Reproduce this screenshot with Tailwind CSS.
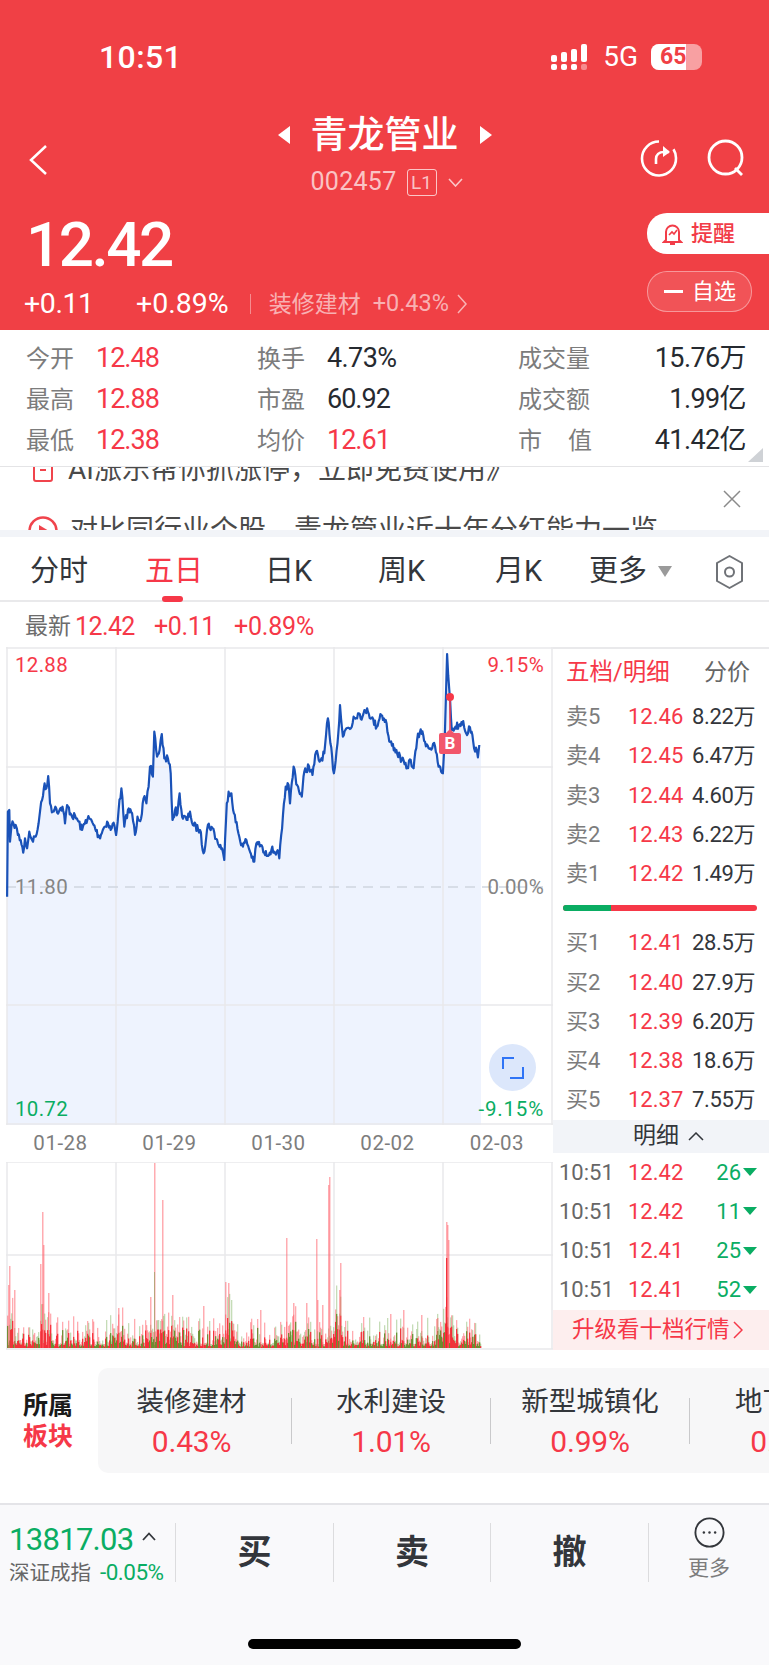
<!DOCTYPE html>
<html lang="zh">
<head>
  <meta charset="UTF-8" />
  <title>青龙管业</title>
  <script src="https://cdn.jsdelivr.net/npm/@tailwindcss/browser@4"></script>
</head>
<body class="bg-white font-['Roboto','Noto_Sans_CJK_SC',sans-serif] overflow-hidden">
<div class="w-[769px] h-[1665px] flex flex-col overflow-hidden">

  <!-- Red header -->
  <header class="bg-[#f04045] text-white h-[330px] shrink-0 flex flex-col">
    <!-- Status bar -->
    <div class="h-[114px] flex items-center pl-[99px] pr-[67px]">
      <span class="text-[32px] font-medium tracking-[0.4px]">10:51</span>
      <svg class="ml-auto" width="38" height="26" viewBox="0 0 38 26" fill="#fff">
        <rect x="0" y="11" width="6" height="7" rx="2"/><rect x="0" y="20" width="6" height="6" rx="2"/>
        <rect x="10" y="8" width="6" height="10" rx="2"/><rect x="10" y="20" width="6" height="6" rx="2"/>
        <rect x="20" y="5" width="6" height="13" rx="2"/><rect x="20" y="20" width="6" height="6" rx="2"/>
        <rect x="30" y="0" width="6" height="18" rx="2"/><rect x="30" y="20" width="6" height="6" rx="2" fill="#fff" fill-opacity=".4"/>
      </svg>
      <span class="ml-[14px] text-[28px] leading-none">5G</span>
      <div class="ml-[13px] w-[51px] h-[26px] rounded-[8px] bg-white/50 overflow-hidden relative">
        <div class="w-[35px] h-[26px] bg-white"></div>
        <span class="absolute inset-0 pl-[9px] text-[23px] leading-[26px] font-bold text-[#f04045]">65</span>
      </div>
    </div>
    <!-- Title row -->
    <div class="h-[86px] flex items-center pl-[29px] pr-[24px] relative">
      <svg class="mt-[5px]" width="18" height="30" viewBox="0 0 18 30" fill="none" stroke="#fff" stroke-width="2.5"><path d="M17 1 2 15l15 14"/></svg>
      <div class="absolute left-0 right-0 top-0 flex flex-col items-center">
        <div class="flex items-center h-[42px]">
          <svg width="12" height="18" viewBox="0 0 12 18" fill="#fff"><path d="M12 0v18L0 9z"/></svg>
          <span class="mx-[21px] text-[37px] leading-none font-medium">青龙管业</span>
          <svg width="12" height="18" viewBox="0 0 12 18" fill="#fff"><path d="M0 0v18l12-9z"/></svg>
        </div>
        <div class="flex items-center h-[32px] mt-[10px] ml-[4px] text-white/70">
          <span class="text-[25px] tracking-[0.3px]">002457</span>
          <span class="ml-[10px] w-[30px] h-[27px] border border-white/70 rounded-[3px] text-[19px] leading-[25px] text-center">L1</span>
          <svg class="ml-[11px]" width="15" height="9" viewBox="0 0 15 9" fill="none" stroke="currentColor" stroke-width="1.6"><path d="m1 1 6.500 7L14 1"/></svg>
        </div>
      </div>
      <svg class="ml-auto mt-[2px]" width="38" height="38" viewBox="0 0 38 38" fill="none" stroke="#fff" stroke-width="2.6">
        <path d="M19 2.500A17 17 0 1 0 36 19a17 17 0 0 0-2.500-8.800"/>
        <path d="M16 25v-5c0-4 3-7 8-7h5"/><path d="m23 7 7 6-7 5" fill="#fff" stroke="none"/>
      </svg>
      <svg class="ml-[29px] mt-[2px]" width="38" height="38" viewBox="0 0 38 38" fill="none" stroke="#fff" stroke-width="2.8">
        <circle cx="18.500" cy="18.500" r="16.500"/><path d="m28 29 7 7"/>
      </svg>
    </div>
    <!-- Price row -->
    <div class="flex-1 flex">
      <div class="flex-1 pl-[26px]">
        <div class="text-[62px] font-medium leading-none mt-[14px] tracking-[-2.500px] h-[75px]">12.42</div>
        <div class="flex items-center h-[30px] text-[28.500px] leading-none">
          <span class="-ml-[2px] w-[112px] tracking-[-0.4px]">+0.11</span>
          <span>+0.89%</span>
          <span class="ml-[21px] w-px h-[20px] bg-white/40"></span>
          <span class="ml-[18px] text-[23px] text-white/60">装修建材</span>
          <span class="ml-[12px] text-[23.500px] text-white/60">+0.43%</span>
          <svg class="ml-[8px]" width="10" height="20" viewBox="0 0 10 20" fill="none" stroke="#fff" stroke-opacity=".6" stroke-width="1.5"><path d="m1 1 8 9-8 9"/></svg>
        </div>
      </div>
      <div class="w-[122px] pt-[13px]">
        <div class="h-[41px] bg-white rounded-l-[20px] flex items-center pl-[15px] text-[#f23c48]">
          <svg width="21" height="24" viewBox="0 0 21 24" fill="none" stroke="currentColor" stroke-width="2">
            <path d="M4 18V10a6.500 6.500 0 0 1 13 0v8l2 2H2z"/><path d="m7 13 3-3 2 2 3-4" stroke-width="1.600"/><path d="M8 22h5"/>
          </svg>
          <span class="ml-[8px] text-[22px] font-medium leading-none">提醒</span>
        </div>
        <div class="mt-[17px] w-[105px] h-[41px] rounded-[20px] border border-white/40 bg-white/10 flex items-center pl-[16px]">
          <span class="w-[19px] h-[2.500px] bg-white"></span>
          <span class="ml-[9px] text-[22px] leading-none">自选</span>
        </div>
      </div>
    </div>
  </header>

  <!-- Quote stats -->
  <section class="h-[137px] shrink-0 relative z-10 bg-white border-b border-[#e4e4e6] pt-[8px] pl-[26px] pr-[23px] grid grid-cols-[231px_261px_1fr] grid-rows-[41px_41px_41px] items-center text-[27px] leading-none tracking-[-0.6px] text-[#262a30]">
    <div class="flex items-center"><span class="w-[70px] text-[24px] tracking-normal text-[#7c7c7c]">今开</span><span class="text-[#f63848] tracking-[-1px]">12.48</span></div>
    <div class="flex items-center"><span class="w-[70px] text-[24px] tracking-normal text-[#7c7c7c]">换手</span><span>4.73%</span></div>
    <div class="flex items-center justify-between"><span class="text-[24px] tracking-normal text-[#7c7c7c]">成交量</span><span>15.76万</span></div>
    <div class="flex items-center"><span class="w-[70px] text-[24px] tracking-normal text-[#7c7c7c]">最高</span><span class="text-[#f63848] tracking-[-1px]">12.88</span></div>
    <div class="flex items-center"><span class="w-[70px] text-[24px] tracking-normal text-[#7c7c7c]">市盈</span><span class="tracking-[-1px]">60.92</span></div>
    <div class="flex items-center justify-between"><span class="text-[24px] tracking-normal text-[#7c7c7c]">成交额</span><span>1.99亿</span></div>
    <div class="flex items-center"><span class="w-[70px] text-[24px] tracking-normal text-[#7c7c7c]">最低</span><span class="text-[#f63848] tracking-[-1px]">12.38</span></div>
    <div class="flex items-center"><span class="w-[70px] text-[24px] tracking-normal text-[#7c7c7c]">均价</span><span class="text-[#f63848] tracking-[-1px]">12.61</span></div>
    <div class="flex items-center justify-between"><span class="w-[74px] flex justify-between text-[24px] tracking-normal text-[#7c7c7c]"><span>市</span><span>值</span></span><span>41.42亿</span></div>
    <svg class="absolute right-[6px] bottom-[4px]" width="15" height="14" viewBox="0 0 15 14" fill="#cfd2d6"><path d="M15 0v14H0z"/></svg>
  </section>

  <!-- Scrolled-off banner rows -->
  <section class="h-[63px] shrink-0 overflow-hidden relative text-[28px] text-[#4a4a4a]">
    <div class="-mt-[17px] h-[40px] flex items-center pl-[33px]">
      <span class="w-[20px] h-[24px] border-2 border-[#f0444c] rounded-[3px] flex items-center justify-center"><span class="w-[6px] h-[2px] bg-[#f0444c]"></span></span>
      <span class="ml-[15px] whitespace-nowrap">AI涨乐帮你抓涨停，立即免费使用》</span>
    </div>
    <div class="mt-[21px] h-[40px] flex items-center pl-[28px]">
      <svg width="30" height="30" viewBox="0 0 30 30" fill="none" stroke="#f0444c" stroke-width="2.500"><circle cx="15" cy="15" r="13.500"/><path d="M11 9v12l10-6z" fill="#f0444c" stroke="none"/></svg>
      <span class="ml-[12px] whitespace-nowrap">对比同行业个股，青龙管业近十年分红能力一览</span>
    </div>
    <svg class="absolute left-[723px] top-[23px]" width="18" height="18" viewBox="0 0 18 18" stroke="#8a8a8a" stroke-width="1.500"><path d="m1 1 16 16M17 1 1 17"/></svg>
  </section>
  <div class="h-[7px] shrink-0 bg-[#f2f4f8]"></div>

  <!-- Period tabs -->
  <nav class="h-[65px] shrink-0 flex items-center relative border-b-2 border-[#e9e9eb] text-[29px] text-[#33363b] pl-[30px] pt-[6px]">
    <span class="w-[115px]">分时</span>
    <span class="w-[120px] text-[#f63848] relative">五日<span class="absolute left-[17px] top-[46px] w-[21px] h-[6px] rounded-full bg-[#f63848]"></span></span>
    <span class="w-[113px]">日K</span>
    <span class="w-[117px]">周K</span>
    <span class="w-[94px]">月K</span>
    <span>更多</span>
    <svg class="ml-[11px]" width="14" height="11" viewBox="0 0 14 11" fill="#9a9a9a"><path d="M0 0h14L7 11z"/></svg>
    <svg class="ml-[43px]" width="29" height="36" viewBox="0 0 29 36" fill="none" stroke="#6f7277" stroke-width="2"><path d="M14.500 2 27 9v18l-12.500 7L2 27V9z" stroke-linejoin="round"/><circle cx="14.500" cy="18" r="4.500"/></svg>
  </nav>

  <!-- Latest line -->
  <div class="h-[45px] shrink-0 flex items-center pl-[25px] text-[25px] text-[#f63848] tracking-[-0.2px] pt-[5px]">
    <span class="text-[#6c6c6c] w-[50px] text-[23px] tracking-normal">最新</span>
    <span class="w-[79px] tracking-[-0.6px]">12.42</span>
    <span class="w-[80px] tracking-[-0.4px]">+0.11</span>
    <span>+0.89%</span>
  </div>

  <!-- Chart + order book -->
  <section class="flex h-[703px] shrink-0">
    <div class="w-[553px] shrink-0 flex flex-col">
      <!-- Price chart -->
      <div class="relative h-[478px]">
        <svg id="priceSvg" class="absolute inset-0" width="553" height="478" viewBox="0 0 553 478"></svg>
        <span class="absolute left-[15px] top-[3px] text-[20.500px] text-[#f63848] tracking-[0.3px]">12.88</span>
        <span class="absolute right-[9px] top-[3px] text-[20.500px] text-[#f63848] tracking-[0.3px]">9.15%</span>
        <span class="absolute left-[15px] top-[225px] text-[20.500px] text-[#858585] tracking-[0.3px]">11.80</span>
        <span class="absolute right-[9px] top-[225px] text-[20.500px] text-[#858585] tracking-[0.3px]">0.00%</span>
        <span class="absolute left-[15px] top-[447px] text-[20.500px] text-[#0aad63] tracking-[0.3px]">10.72</span>
        <span class="absolute right-[9px] top-[447px] text-[20.500px] text-[#0aad63] tracking-[0.8px]">-9.15%</span>
        <div class="absolute left-[489px] top-[397px] w-[47px] h-[47px] rounded-full bg-[#dce7fb] flex items-center justify-center">
          <svg width="22" height="22" viewBox="0 0 22 22" fill="none" stroke="#2f74f6" stroke-width="2"><path d="M1 12V1h11M21 10v11H8"/></svg>
        </div>
        <div class="absolute left-[439px] top-[86px] w-[22px] h-[21px] rounded-[2px] bg-[#f2566b] text-white text-[17px] font-bold leading-[21px] text-center">B</div>
      </div>
      <!-- Dates -->
      <div class="h-[37px] ml-[6px] grid grid-cols-[109px_109px_109px_109px_110px] items-center text-center text-[20.500px] text-[#7d7d7d] tracking-[0.5px]">
        <span>01-28</span><span>01-29</span><span>01-30</span><span>02-02</span><span>02-03</span>
      </div>
      <!-- Volume -->
      <svg id="volSvg" width="553" height="188" viewBox="0 0 553 188"></svg>
    </div>

    <!-- Order book -->
    <div class="flex-1 flex flex-col border-t-2 border-[#e9e9eb] text-[22px] text-[#33363b]">
      <div class="h-[48px] shrink-0 flex items-center justify-between pl-[13px] pr-[19px]">
        <span class="text-[23.500px] text-[#f63848]">五档/明细</span>
        <span class="text-[23px] text-[#666]">分价</span>
      </div>
      <div class="h-[39.250px] flex items-center pl-[13px] pr-[14px]"><span class="w-[62px] text-[#7c7c7c]">卖5</span><span class="text-[#f63848]">12.46</span><span class="ml-auto tracking-[-0.4px]">8.22万</span></div>
      <div class="h-[39.250px] flex items-center pl-[13px] pr-[14px]"><span class="w-[62px] text-[#7c7c7c]">卖4</span><span class="text-[#f63848]">12.45</span><span class="ml-auto tracking-[-0.4px]">6.47万</span></div>
      <div class="h-[39.250px] flex items-center pl-[13px] pr-[14px]"><span class="w-[62px] text-[#7c7c7c]">卖3</span><span class="text-[#f63848]">12.44</span><span class="ml-auto tracking-[-0.4px]">4.60万</span></div>
      <div class="h-[39.250px] flex items-center pl-[13px] pr-[14px]"><span class="w-[62px] text-[#7c7c7c]">卖2</span><span class="text-[#f63848]">12.43</span><span class="ml-auto tracking-[-0.4px]">6.22万</span></div>
      <div class="h-[39.250px] flex items-center pl-[13px] pr-[14px]"><span class="w-[62px] text-[#7c7c7c]">卖1</span><span class="text-[#f63848]">12.42</span><span class="ml-auto tracking-[-0.4px]">1.49万</span></div>
      <div class="h-[30px] flex items-center pl-[10px] pr-[12px]">
        <div class="w-full h-[6px] rounded-full bg-[#f63848] overflow-hidden"><div class="w-[48px] h-[6px] bg-[#0aad63]"></div></div>
      </div>
      <div class="h-[39.250px] flex items-center pl-[13px] pr-[14px]"><span class="w-[62px] text-[#7c7c7c]">买1</span><span class="text-[#f63848]">12.41</span><span class="ml-auto tracking-[-0.4px]">28.5万</span></div>
      <div class="h-[39.250px] flex items-center pl-[13px] pr-[14px]"><span class="w-[62px] text-[#7c7c7c]">买2</span><span class="text-[#f63848]">12.40</span><span class="ml-auto tracking-[-0.4px]">27.9万</span></div>
      <div class="h-[39.250px] flex items-center pl-[13px] pr-[14px]"><span class="w-[62px] text-[#7c7c7c]">买3</span><span class="text-[#f63848]">12.39</span><span class="ml-auto tracking-[-0.4px]">6.20万</span></div>
      <div class="h-[39.250px] flex items-center pl-[13px] pr-[14px]"><span class="w-[62px] text-[#7c7c7c]">买4</span><span class="text-[#f63848]">12.38</span><span class="ml-auto tracking-[-0.4px]">18.6万</span></div>
      <div class="h-[39.250px] flex items-center pl-[13px] pr-[14px]"><span class="w-[62px] text-[#7c7c7c]">买5</span><span class="text-[#f63848]">12.37</span><span class="ml-auto tracking-[-0.4px]">7.55万</span></div>
      <div class="h-[33px] shrink-0 bg-[#f2f4f8] flex items-center pl-[80px] text-[23px]">
        <span>明细</span>
        <svg class="ml-[9px]" width="16" height="9" viewBox="0 0 16 9" fill="none" stroke="#33363b" stroke-width="1.500"><path d="m1 8 7-7 7 7"/></svg>
      </div>
      <div class="h-[39.250px] flex items-center pl-[6px] pr-[12px]"><span class="w-[69px] text-[#666]">10:51</span><span class="text-[#f63848]">12.42</span><span class="ml-auto text-[#0aad63]">26</span><svg class="ml-[2px]" width="14" height="8" viewBox="0 0 14 8" fill="#0aad63"><path d="M0 0h14L7 8z"/></svg></div>
      <div class="h-[39.250px] flex items-center pl-[6px] pr-[12px]"><span class="w-[69px] text-[#666]">10:51</span><span class="text-[#f63848]">12.42</span><span class="ml-auto text-[#0aad63]">11</span><svg class="ml-[2px]" width="14" height="8" viewBox="0 0 14 8" fill="#0aad63"><path d="M0 0h14L7 8z"/></svg></div>
      <div class="h-[39.250px] flex items-center pl-[6px] pr-[12px]"><span class="w-[69px] text-[#666]">10:51</span><span class="text-[#f63848]">12.41</span><span class="ml-auto text-[#0aad63]">25</span><svg class="ml-[2px]" width="14" height="8" viewBox="0 0 14 8" fill="#0aad63"><path d="M0 0h14L7 8z"/></svg></div>
      <div class="h-[39.250px] flex items-center pl-[6px] pr-[12px]"><span class="w-[69px] text-[#666]">10:51</span><span class="text-[#f63848]">12.41</span><span class="ml-auto text-[#0aad63]">52</span><svg class="ml-[2px]" width="14" height="8" viewBox="0 0 14 8" fill="#0aad63"><path d="M0 0h14L7 8z"/></svg></div>
      <div class="h-[40px] shrink-0 bg-[#fdeeee] flex items-center pl-[19px] text-[#f63848] text-[22.500px]">
        <span>升级看十档行情</span>
        <svg class="ml-[3px]" width="10" height="18" viewBox="0 0 10 18" fill="none" stroke="#f63848" stroke-width="1.500"><path d="m1 1 8 8-8 8"/></svg>
      </div>
    </div>
  </section>

  <!-- Sectors -->
  <section class="h-[153px] shrink-0 flex pt-[18px] overflow-hidden">
    <div class="w-[98px] shrink-0 pl-[23px] pt-[22px] text-[25px] leading-[31px] font-bold text-[#1a1a1a]">所属<br><span class="text-[#f63848]">板块</span></div>
    <div class="flex-1 h-[105px] bg-[#f7f7f8] rounded-l-[10px] flex items-center overflow-hidden">
      <div class="w-[194px] shrink-0 border-r border-[#c9c9cb] h-[46px] pr-[6px] flex flex-col items-center"><span class="-mt-[13px] text-[27.500px] leading-[34px] text-[#33363b] whitespace-nowrap">装修建材</span><span class="text-[30px] leading-[46px] text-[#f63848] tracking-[-0.2px]">0.43%</span></div>
      <div class="w-[199px] shrink-0 border-r border-[#c9c9cb] h-[46px] flex flex-col items-center"><span class="-mt-[13px] text-[27.500px] leading-[34px] text-[#33363b] whitespace-nowrap">水利建设</span><span class="text-[30px] leading-[46px] text-[#f63848] tracking-[-0.2px]">1.01%</span></div>
      <div class="w-[199px] shrink-0 border-r border-[#c9c9cb] h-[46px] flex flex-col items-center"><span class="-mt-[13px] text-[27.500px] leading-[34px] text-[#33363b] whitespace-nowrap">新型城镇化</span><span class="text-[30px] leading-[46px] text-[#f63848] tracking-[-0.2px]">0.99%</span></div>
      <div class="shrink-0 ml-[45px] h-[46px] flex flex-col items-center"><span class="-mt-[13px] text-[27.500px] leading-[34px] text-[#33363b] whitespace-nowrap">地下管网</span><span class="text-[30px] leading-[46px] text-[#f63848] tracking-[-0.2px]">0.82%</span></div>
    </div>
  </section>

  <!-- Bottom bar -->
  <footer class="flex-1 bg-[#f9f9fb] border-t-2 border-[#e4e4e8] relative">
    <div class="flex h-[77px] pt-[18px]">
      <div class="w-[176px] shrink-0 border-r border-[#dcdcde] h-[59px] pl-[9px]">
        <div class="flex items-center h-[36px] -mt-[2px]">
          <span class="text-[31px] leading-none text-[#0aad63] tracking-[-0.7px]">13817.03</span>
          <svg class="ml-[8px] -mt-[6px]" width="14" height="9" viewBox="0 0 14 9" fill="none" stroke="#33363b" stroke-width="1.800"><path d="m1 8 6-6.500L13 8"/></svg>
        </div>
        <div class="flex items-center h-[32px] whitespace-nowrap">
          <span class="text-[20.500px] text-[#666]">深证成指</span>
          <span class="ml-[9px] text-[22.500px] text-[#0aad63] tracking-[-0.5px]">-0.05%</span>
        </div>
      </div>
      <div class="w-[158px] border-r border-[#dcdcde] h-[59px] flex items-center justify-center text-[34px] font-bold text-[#33363b]">买</div>
      <div class="w-[157px] border-r border-[#dcdcde] h-[59px] flex items-center justify-center text-[34px] font-bold text-[#33363b]">卖</div>
      <div class="w-[158px] border-r border-[#dcdcde] h-[59px] flex items-center justify-center text-[34px] font-bold text-[#33363b]">撤</div>
      <div class="flex-1 flex flex-col items-center -mt-[6px]">
        <svg width="33" height="33" viewBox="0 0 33 33" fill="none" stroke="#33363b" stroke-width="2"><circle cx="16.500" cy="16.500" r="15"/><circle cx="10.500" cy="16.500" r="1.300" fill="#33363b" stroke="none"/><circle cx="16.500" cy="16.500" r="1.300" fill="#33363b" stroke="none"/><circle cx="22.500" cy="16.500" r="1.300" fill="#33363b" stroke="none"/></svg>
        <span class="mt-[6px] text-[21px] leading-[28px] text-[#7c7c7c]">更多</span>
      </div>
    </div>
    <div class="absolute left-[248px] top-[134px] w-[273px] h-[10px] rounded-full bg-black"></div>
  </footer>
</div>

<script>
  // price line, traced from the chart (x * 2.8, (y + 7) * 3)
  var trace = [20,770,22,515,26,510,28,605,32,560,38,552,44,555,50,585,58,600,65,638,70,595,76,625,82,575,90,600,100,590,108,550,112,515,118,480,125,430,130,445,135,408,140,490,148,515,155,500,165,515,175,500,182,550,188,495,200,525,215,535,230,570,240,540,250,535,262,555,278,592,290,565,300,545,310,570,318,548,325,585,332,510,340,445,348,560,358,510,370,520,378,585,385,530,395,535,402,475,410,490,416,440,420,380,428,410,432,275,440,350,447,330,453,282,460,355,470,355,478,400,483,540,490,510,497,520,503,460,510,530,525,540,532,515,540,555,560,570,570,640,582,555,595,565,610,610,622,625,628,660,635,490,640,455,648,460,655,520,670,590,680,620,690,600,700,635,712,665,718,610,730,615,742,645,760,630,775,635,782,655,790,565,800,440,808,435,812,490,822,380,832,435,845,470,852,395,865,378,875,405,885,335,895,365,908,340,918,235,925,310,935,400,945,310,952,195,960,290,970,265,985,260,990,230,1005,220,1015,230,1028,205,1040,235,1055,260,1065,222,1080,240,1090,305,1105,325,1125,360,1138,385,1150,360,1158,385,1168,300,1178,268,1190,305,1205,325,1218,318,1228,380,1240,400,1246,270,1252,42,1258,150,1265,270,1275,260,1285,255,1297,243,1305,280,1316,262,1325,305,1338,352,1342,315];

  var seed = 7;
  function rnd() { seed = (seed * 16807) % 2147483647; return seed / 2147483647; }

  var pts = [];
  for (var i = 0; i < trace.length; i += 2) {
    var x = trace[i] / 2.8, y = trace[i + 1] / 3 - 7;
    if (i > 0) {
      // wiggle between traced points so the line looks like tick data
      var px = trace[i - 2] / 2.8, py = trace[i - 1] / 3 - 7;
      var steps = Math.floor((x - px) / 0.8);
      for (var k = 1; k < steps; k++) {
        var mx = px + (x - px) * k / steps;
        var my = py + (y - py) * k / steps + (rnd() - 0.5) * 8;
        pts.push(mx.toFixed(1) + ',' + my.toFixed(1));
      }
    }
    pts.push(x.toFixed(1) + ',' + y.toFixed(1));
  }
  var line = pts.join(' ');
  var grid = '#e9e9eb';
  var s = '';
  s += '<polygon points="7,478 ' + line + ' 481,105 481,478" fill="#eef3fe"/>';
  [7, 116, 225, 334, 443, 552].forEach(function (gx) { s += '<line x1="' + gx + '" y1="0" x2="' + gx + '" y2="478" stroke="' + grid + '" stroke-width="1.5"/>'; });
  [1, 120, 358, 477].forEach(function (gy) { s += '<line x1="6" y1="' + gy + '" x2="553" y2="' + gy + '" stroke="' + grid + '" stroke-width="1.5"/>'; });
  s += '<line x1="6" y1="240" x2="549" y2="240" stroke="#cfd6e0" stroke-width="1.5" stroke-dasharray="10 7"/>';
  s += '<polyline points="' + line + '" fill="none" stroke="#1a52b8" stroke-width="2.200" stroke-linejoin="round"/>';
  s += '<line x1="450" y1="50" x2="450" y2="86" stroke="#f63848" stroke-width="1.5"/><path d="M445 87l5-5 5 5z" fill="#f2566b"/><circle cx="450" cy="50" r="4" fill="#f63848"/>';
  document.getElementById('priceSvg').innerHTML = s;

  // volume bars: x -> top of the light bar in page y
  var spikes = {154:1163,162:1200,329:1177,328:1185,316:1239,286:1238,42:1212,43:1245,40:1264,9:1266,8:1285,14:1290,48:1293,446:1222,447:1225,448:1240,340:1263,225:1282,228:1283,293:1303,150:1297,172:1295,203:1306,118:1308,339:1290,390:1314,403:1310,421:1315,260:1310,437:1318,306:1303,317:1300,322:1305};
  var v = '';
  [7, 116, 225, 334, 443, 552].forEach(function (gx) { v += '<line x1="' + gx + '" y1="0" x2="' + gx + '" y2="187" stroke="' + grid + '" stroke-width="1.5"/>'; });
  [0, 93, 187].forEach(function (gy) { v += '<line x1="6" y1="' + gy + '" x2="553" y2="' + gy + '" stroke="' + grid + '" stroke-width="1.5"/>'; });
  for (var bx = 7; bx < 481; bx += 1) {
    // light tall bar + darker short one on top of each other
    var noise = 4 + Math.pow(rnd(), 2.5) * 28;
    var lift = 0;
    [[10, 40], [43, 36], [118, 26], [160, 22], [172, 30], [228, 36], [290, 26], [335, 40], [445, 42]].forEach(function (c) {
      var d = Math.abs(bx - c[0]);
      if (d < 11) lift = Math.max(lift, c[1] * (1 - d / 11) * rnd());
    });
    var h = noise + lift;
    v += '<rect x="' + bx + '" y="' + (186 - h).toFixed(1) + '" width="1.300" height="' + h.toFixed(1) + '" fill="' + (rnd() > 0.5 ? '#ff2d3a' : '#6fa84a') + '" fill-opacity="0.4"/>';
    var h2 = h * (0.3 + rnd() * 0.4);
    v += '<rect x="' + bx + '" y="' + (186 - h2).toFixed(1) + '" width="1.300" height="' + h2.toFixed(1) + '" fill="' + (rnd() > 0.45 ? '#f5202c' : '#5b8a22') + '" fill-opacity="0.85"/>';
    if (spikes[bx]) {
      var barTop = spikes[bx] - 1162;
      v += '<rect x="' + bx + '" y="' + barTop + '" width="1.500" height="' + (186 - barTop) + '" fill="#ff5a64" fill-opacity="0.5"/>';
    }
  }
  v += '<rect x="446" y="96" width="1.300" height="90" fill="#f01c28" fill-opacity="0.85"/>';
  v += '<rect x="154" y="110" width="1" height="76" fill="#4c9a2a" fill-opacity="0.4"/>';
  document.getElementById('volSvg').innerHTML = v;
</script>
</body>
</html>
